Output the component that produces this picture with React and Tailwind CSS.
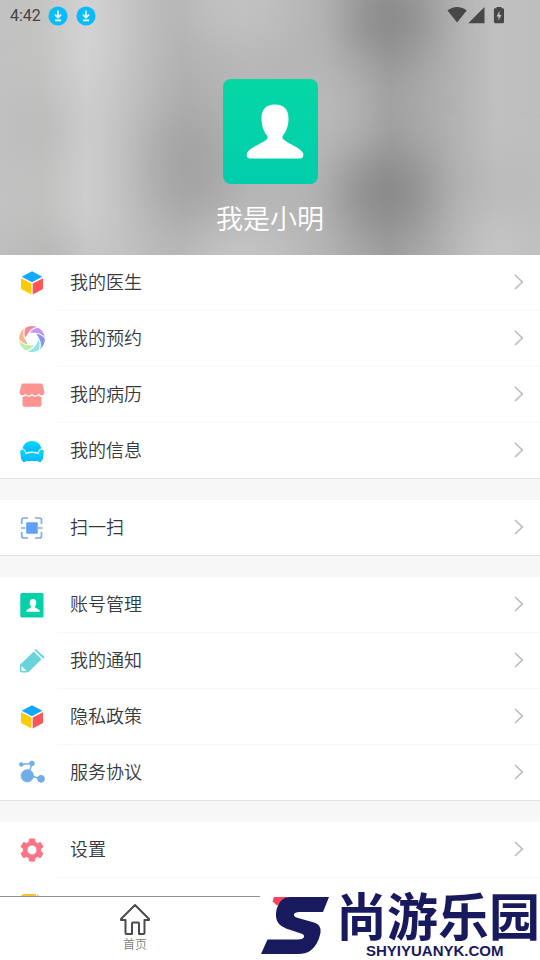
function HeaderBackdrop() {
  return (
    <svg className="absolute inset-0 h-full w-full" viewBox="0 0 540 255" preserveAspectRatio="none" aria-hidden="true">
      <defs>
        <filter id="soft" x="-150%" y="-150%" width="400%" height="400%">
          <feGaussianBlur stdDeviation="27" />
        </filter>
        <linearGradient id="base" x1="0" x2="1" y1="0" y2="0">
          <stop offset="0" stopColor="#c2c2c2" />
          <stop offset="0.08" stopColor="#c2c2c1" />
          <stop offset="0.16" stopColor="#cecece" />
          <stop offset="0.24" stopColor="#c1c1c1" />
          <stop offset="0.34" stopColor="#b1b1b1" />
          <stop offset="0.46" stopColor="#b7b7b7" />
          <stop offset="0.6" stopColor="#b3b3b3" />
          <stop offset="0.72" stopColor="#a0a0a0" />
          <stop offset="0.82" stopColor="#afafaf" />
          <stop offset="0.92" stopColor="#c0c0c0" />
          <stop offset="1" stopColor="#bebebe" />
        </linearGradient>
      </defs>
      <rect width="540" height="255" fill="url(#base)" />
      <g filter="url(#soft)">
        <ellipse cx="90" cy="25" rx="14" ry="60" fill="#dadada" />
        <ellipse cx="38" cy="128" rx="26" ry="26" fill="#b6b6b6" />
        <ellipse cx="50" cy="266" rx="44" ry="18" fill="#a8a8a8" />
        <ellipse cx="190" cy="165" rx="36" ry="58" fill="#a0a0a0" />
        <ellipse cx="235" cy="5" rx="60" ry="26" fill="#c8c8c8" />
        <ellipse cx="240" cy="262" rx="60" ry="20" fill="#d2d2d2" />
        <ellipse cx="390" cy="18" rx="36" ry="38" fill="#818181" />
        <ellipse cx="388" cy="192" rx="44" ry="34" fill="#818181" />
        <ellipse cx="335" cy="110" rx="18" ry="34" fill="#c4c4c4" />
        <ellipse cx="495" cy="190" rx="40" ry="18" fill="#b2b2b2" />
        <ellipse cx="495" cy="250" rx="28" ry="20" fill="#cecece" />
      </g>
    </svg>
  );
}

function DownloadBadge() {
  return (
    <svg className="size-5" viewBox="0 0 20 20" aria-hidden="true">
      <circle cx="10" cy="10" r="9.6" fill="#09bdfd" />
      <path d="M10 4.4v7M6.9 8.6 10 11.7l3.1-3.1M7 14.4h6" fill="none" stroke="#fff" strokeWidth="1.6" />
    </svg>
  );
}

function StatusBar() {
  return (
    <div className="relative flex h-8 items-center pr-9 pl-2.5 text-[#444444]">
      <span className="w-[38px] font-[Roboto,sans-serif] text-base leading-8">4:42</span>
      <div className="flex gap-2">
        <DownloadBadge />
        <DownloadBadge />
      </div>
      <svg className="ml-auto h-[18px] w-[58px]" viewBox="0 0 58 18" fill="#474747" aria-hidden="true">
        <path d="M1.500 3.600C6.900-1.200 15.300-1.200 20.700 3.600L11.100 15.600Z" />
        <path d="M38.500 0V16.200H22.300Z" />
        <path fillRule="evenodd" d="M50.500 0h5v1.200h1.200q1.400 0 1.400 1.400v12.200q0 1.400-1.400 1.400h-7.400q-1.400 0-1.400-1.400V2.600q0-1.400 1.400-1.400h1.200ZM53.500 4l-3 5.600h2v4l3-5.600h-2Z" />
      </svg>
    </div>
  );
}

function PersonIcon({ className }) {
  return (
    <svg className={className} viewBox="0 0 96 105" preserveAspectRatio="none" aria-hidden="true">
      <defs>
        <linearGradient id="person" x1="0" x2="0" y1="0" y2="1">
          <stop offset="0" stopColor="#05d7a5" />
          <stop offset="1" stopColor="#02cdac" />
        </linearGradient>
      </defs>
      <rect x="1" width="95" height="105" rx="8" fill="url(#person)" />
      <path
        d="M53 25.500c9 0 13.500 5 13.500 14 0 8-2.500 13.500-6 17.500v2.500c3 4 18 9 20.500 14.500.9 3-.3 5.500-3 5.500H28c-2.700 0-3.900-2.500-3-5.500 2.500-5.500 17.500-10.500 20.500-14.500V57c-3.500-4-6-9.500-6-17.500 0-9 4.500-14 13.500-14Z"
        fill="#fff"
      />
    </svg>
  );
}

function Glyph({ children }) {
  return (
    <svg className="size-[26px]" viewBox="0 0 26 26" aria-hidden="true">
      {children}
    </svg>
  );
}

function CubeIcon() {
  return (
    <Glyph>
      <path d="M13 1.200 23.300 6.700 13 12.200 2.700 6.700Z" fill="#10a9ff" />
      <path d="M2 8.200 12.400 13.600V24.400L3 19.600Q2 19 2 18Z" fill="#fecb02" />
      <path d="M24 8.200 13.700 13.600V24.400L23 19.600Q24 19 24 18Z" fill="#fe5556" />
    </Glyph>
  );
}

const blades = ["#f98a96", "#c795f2", "#8b92f2", "#8fe6f1", "#b9efa9", "#f8b589"];

function ApertureIcon() {
  return (
    <Glyph>
      {blades.map((color, i) => (
        <path
          key={color}
          d="M4.300 3.500Q10.500-2 18.500 1.200Q11 2.500 8.600 10L5.500 12.500Q2.500 8 4.300 3.500Z"
          fill={color}
          transform={`rotate(${i * 60} 13 13)`}
        />
      ))}
      <circle cx="13" cy="13" r="6.500" fill="#fff" />
      {blades.map((color, i) => (
        <path
          key={color}
          d="M8 11Q10.500 2.500 19.500 1"
          fill="none"
          stroke="#fff"
          strokeWidth="1.100"
          transform={`rotate(${i * 60} 13 13)`}
        />
      ))}
    </Glyph>
  );
}

function ShopIcon() {
  return (
    <Glyph>
      <path
        d="M4 1.500h18q1.200 0 1.700 1.200L25.300 9.500q.6 3.400-2.700 3.800-2 .2-3-1.700-1 1.900-3.300 1.900t-3.300-1.900q-1 1.900-3.300 1.900t-3.300-1.900q-1 1.900-3 1.700-3.300-.4-2.700-3.800L2.300 2.700Q2.800 1.500 4 1.500Z"
        fill="#fe9491"
      />
      <path d="M3.500 14.700q1.900.2 3.200-1.200 3.200 2.400 6.300 0 3.200 2.400 6.300 0 1.300 1.400 3.200 1.200v8.200q0 1.800-1.800 1.800H5.300q-1.800 0-1.800-1.800Z" fill="#fe9491" />
    </Glyph>
  );
}

function SofaIcon() {
  return (
    <Glyph>
      <defs>
        <linearGradient id="sofa" x1="0" x2="0" y1="0" y2="1">
          <stop offset="0" stopColor="#05d9fe" />
          <stop offset="1" stopColor="#04b6fd" />
        </linearGradient>
      </defs>
      <g fill="url(#sofa)">
        <path d="M3.500 10.500C4.500 6 8 3 13 3s8.500 3 9.500 7.500q-3 .6-3.400 3.900-6.100-1.600-12.200 0-.4-3.300-3.400-3.900Z" />
        <path d="M3 11.500q3 0 3.500 4.600 6.500-2 13 0 .5-4.600 3.500-4.600 2.300.5 1.700 3.500l-.9 6q-.3 2-1.800 2v1h-2.600v-1H6.600v1H4v-1q-1.500 0-1.800-2l-.9-6Q.7 12 3 11.500Z" />
      </g>
    </Glyph>
  );
}

function ScanIcon() {
  return (
    <Glyph>
      <rect x="7.200" y="7.300" width="11.600" height="11.400" rx="1" fill="#629ffd" />
      <path
        d="M2.700 9V5q0-2 2-2H9M16 3h4.500q2 0 2 2v4M22.500 17v4q0 2-2 2H16M9 23H4.700q-2 0-2-2v-4M2 13h4.500M19 13h4.500"
        fill="none"
        stroke="#75adfd"
        strokeWidth="1.700"
      />
    </Glyph>
  );
}

function AccountIcon() {
  return (
    <Glyph>
      <rect x="1.300" y="1" width="23.200" height="24.500" rx="1.500" fill="#03d2a8" />
      <path d="M14 7c2.200 0 3.300 1.500 3.300 3.700 0 1.700-.6 3-1.500 3.800v.7c1 1 4.500 1.900 5 3.600q.2 1-.8 1H8q-1 0-.8-1c.5-1.700 4-2.600 5-3.600v-.7c-.9-.8-1.500-2.100-1.500-3.800C10.700 8.500 11.800 7 14 7Z" fill="#fff" />
    </Glyph>
  );
}

function PencilIcon() {
  return (
    <Glyph>
      <path d="M14.700 3.500 22.500 11.200 9.700 24 7 24.500H2.800Q1 24.500 1 22.800V16.700Z" fill="#68d3da" />
      <path d="M16.200 1.600 25 10" stroke="#68d3da" strokeWidth="2" />
      <path d="M2.500 18v5h5.200Z" fill="#fff" />
    </Glyph>
  );
}

function MoleculeIcon() {
  return (
    <Glyph>
      <g fill="#72ade8" stroke="#72ade8">
        <path d="M2 4.500 13 3.400 9.500 15 22 19" fill="none" strokeWidth="1.400" />
        <circle cx="2.300" cy="4.500" r="1.800" />
        <circle cx="13" cy="3.400" r="2.300" />
        <circle cx="8.300" cy="15.800" r="6.100" />
        <circle cx="22" cy="18.800" r="3.400" />
      </g>
    </Glyph>
  );
}

function GearIcon() {
  return (
    <Glyph>
      <path
        fillRule="evenodd"
        fill="#fe7286"
        stroke="#fe7286"
        strokeWidth="1"
        strokeLinejoin="round"
        d="M10.500 2h5l.6 3.300 2.300 1.300 3-1.200 2.600 4.300-2.500 2.200v2.300l2.500 2.200-2.600 4.300-3-1.200-2.300 1.300-.6 3.300h-5l-.6-3.300-2.300-1.300-3 1.200L2 16.400l2.500-2.200v-2.300L2 9.700l2.600-4.300 3 1.200 2.300-1.300ZM13 8a5 5 0 1 0 0 10A5 5 0 0 0 13 8Z"
      />
    </Glyph>
  );
}

function NoteIcon() {
  return (
    <Glyph>
      <path d="M5 1h12v23H5q-3 0-3-3V4q0-3 3-3Z" fill="#fdc22d" />
      <path d="M18 1l4 4v17q0 2-2 2h-2Z" fill="#fdc22d" />
    </Glyph>
  );
}

const sections = [
  [
    ["我的医生", CubeIcon],
    ["我的预约", ApertureIcon],
    ["我的病历", ShopIcon],
    ["我的信息", SofaIcon],
  ],
  [["扫一扫", ScanIcon]],
  [
    ["账号管理", AccountIcon],
    ["我的通知", PencilIcon],
    ["隐私政策", CubeIcon],
    ["服务协议", MoleculeIcon],
  ],
  [
    ["设置", GearIcon],
    ["问题反馈", NoteIcon],
  ],
];

function MenuRow({ label, Icon, last }) {
  return (
    <li>
      <button type="button" className="flex h-14 w-full items-stretch text-left">
        <span className="flex w-[57px] items-center pl-[19px]">
          <Icon />
        </span>
        <span className={`flex flex-1 items-center justify-between border-b pr-4 pb-0.5 pl-[13px] ${last ? "border-transparent" : "border-[#f7f7f7]"}`}>
          <span className="pb-px text-lg font-[350] text-[#363a3e]">{label}</span>
          <svg className="h-4 w-2.5" viewBox="0 0 10 16" fill="none" stroke="#bdbdbd" strokeWidth="1.700" aria-hidden="true">
            <path d="M1 1 8.300 8 1 15" />
          </svg>
        </span>
      </button>
    </li>
  );
}

function Watermark() {
  return (
    <div className="absolute right-0 bottom-0 flex h-[70px] w-[280px] bg-white text-[#191a5e]">
      <svg className="h-[70px] w-[76px] shrink-0" viewBox="0 0 76 70" aria-hidden="true">
        <path d="M14 7h14L17 15.500 12.500 11.500Z" fill="#fe4359" />
        <path
          d="M30 7H69L63 22H40Q33 22 34 25.500 34.500 27 38 28L54 32.500Q62 35 60.500 43 58 55 50 61 45.500 64 38 64H1L7.500 49.500H38Q43 49.500 44 47 44.500 44.500 41 43.500L26 38.500Q17 35 16 27 15.500 18 20 12 24 7 30 7Z"
          fill="#191a5e"
        />
      </svg>
      <div className="flex-1 whitespace-nowrap">
        <div className="font-['Noto_Sans_CJK_SC',sans-serif] text-[51px] leading-[48px] font-bold">尚游乐园</div>
        <div className="mt-[5px] pl-[30px] font-['Liberation_Sans',sans-serif] text-[15px] leading-4 font-bold">SHYIYUANYK.COM</div>
      </div>
    </div>
  );
}

export default function App() {
  return (
    <div className="relative flex h-screen flex-col overflow-hidden bg-[#f7f7f7] font-['Noto_Sans_CJK_SC',sans-serif]">
      <main className="min-h-0 flex-1 overflow-y-auto [scrollbar-width:none]">
        <header className="relative h-[255px] overflow-hidden">
          <HeaderBackdrop />
          <StatusBar />
          <div className="relative flex flex-col items-center pt-[47px]">
            <PersonIcon className="h-[105px] w-24" />
            <h1 className="mt-3.5 text-[27px] leading-10 font-[350] text-white">我是小明</h1>
          </div>
        </header>
        <div className="flex flex-col gap-[21px]">
          {sections.map((rows) => (
            <ul key={rows[0][0]} className="bg-white shadow-[inset_0_-1px_0_#e2e2e2]">
              {rows.map(([label, Icon], i) => (
                <MenuRow key={label} label={label} Icon={Icon} last={i === rows.length - 1} />
              ))}
            </ul>
          ))}
        </div>
      </main>
      <nav className="grid h-16 grid-cols-2 border-t border-[#8f8f8f] bg-white">
        <a href="#home" className="flex flex-col items-center pt-1.5 text-[#808080]">
          <svg className="h-8 w-8" viewBox="0 0 32 32" fill="none" stroke="#4b4b4b" strokeWidth="2" strokeLinejoin="round" aria-hidden="true">
            <path d="M16 2 30 16v1h-4.500v13q0 1-1 1H20V20.500q0-1-1-1h-5q-1 0-1 1V31H7.500q-1 0-1-1V17H2v-1Z" />
          </svg>
          <span className="text-xs leading-[18px] font-[350]">首页</span>
        </a>
      </nav>
      <Watermark />
    </div>
  );
}
